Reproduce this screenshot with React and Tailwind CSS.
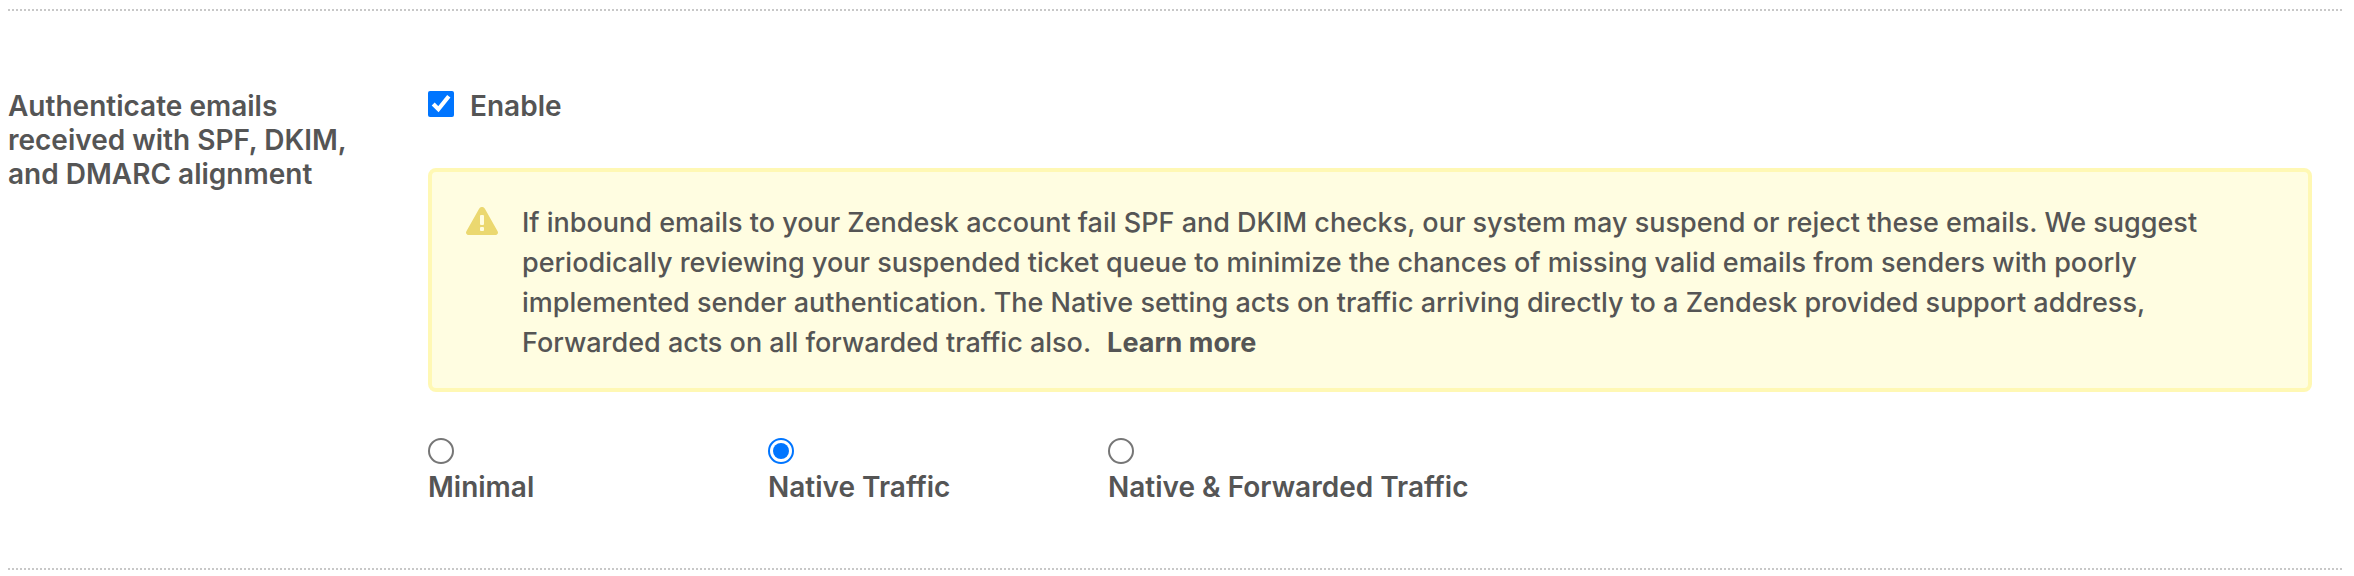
import { useState } from "react";

const MODES = [
  { value: "minimal", label: "Minimal" },
  { value: "native", label: "Native Traffic" },
  { value: "forwarded", label: "Native & Forwarded Traffic" },
];

function WarningIcon() {
  return (
    <svg viewBox="0 0 32 28" className="mt-1 h-7 w-8 shrink-0" aria-hidden="true">
      <path
        d="M13.1 1.7a3.3 3.3 0 0 1 5.8 0L31.6 24.2a2.5 2.5 0 0 1-2.2 3.8H2.6a2.5 2.5 0 0 1-2.2-3.8Z"
        fill="#ebd870"
      />
      <rect x="14" y="8" width="4" height="10" rx="1" fill="#fffde1" />
      <rect x="14" y="20" width="4" height="4" rx="1" fill="#fffde1" />
    </svg>
  );
}

/**
 * Warning box shown above the traffic options.
 */
function Notice({ children, link }) {
  return (
    <div className="flex gap-6 rounded-lg border-4 border-[#fff8b4] bg-[#fffde1] pt-[31px] pr-20 pb-[25px] pl-[34px]">
      <WarningIcon />
      <p className="text-[27px] leading-[40px] font-medium">
        <span>{children}</span>
        {link}
      </p>
    </div>
  );
}

export default function App() {
  const [enabled, setEnabled] = useState(true);
  const [mode, setMode] = useState("native");

  return (
    <main className="bg-white pt-[9px] pr-3 pb-[6px] pl-2 font-['Inter',sans-serif] text-[#555555]">
      <section className="flex border-y-2 border-dotted border-[#c8c8c8] pt-[78px] pr-[30px] pb-16">
        <h2 className="w-[420px] shrink-0 pr-16 text-[28px] leading-[34px] font-semibold">
          Authenticate emails received with SPF, DKIM, and DMARC alignment
        </h2>

        <div className="min-w-0 flex-1">
          <label className="flex items-start gap-4 text-[28px] leading-[34px] font-semibold">
            <input
              type="checkbox"
              checked={enabled}
              onChange={(e) => setEnabled(e.target.checked)}
              className="mt-[2px] size-[26px] accent-[#0075ff]"
            />
            Enable
          </label>

          <div className="mt-[45px]">
            <Notice
              link={
                <a href="#learn-more" className="ml-4 font-bold">
                  Learn more
                </a>
              }
            >
              If inbound emails to your Zendesk account fail SPF and DKIM checks, our system may
              suspend or reject these emails. We suggest periodically reviewing your suspended
              ticket queue to minimize the chances of missing valid emails from senders with poorly
              implemented sender authentication. The Native setting acts on traffic arriving
              directly to a Zendesk provided support address, Forwarded acts on all forwarded
              traffic also.
            </Notice>
          </div>

          <div role="radiogroup" aria-label="Traffic" className="mt-[46px] flex">
            {MODES.map((item) => (
              <label
                key={item.value}
                className="flex min-w-[340px] flex-col gap-[6px] text-[28px] leading-[34px] font-semibold"
              >
                <input
                  type="radio"
                  name="mode"
                  value={item.value}
                  checked={mode === item.value}
                  onChange={() => setMode(item.value)}
                  className="size-[26px] appearance-none rounded-full border-2 border-[#767676] bg-clip-content p-[3px] checked:border-[#0075ff] checked:bg-[#0075ff]"
                />
                {item.label}
              </label>
            ))}
          </div>
        </div>
      </section>
    </main>
  );
}
